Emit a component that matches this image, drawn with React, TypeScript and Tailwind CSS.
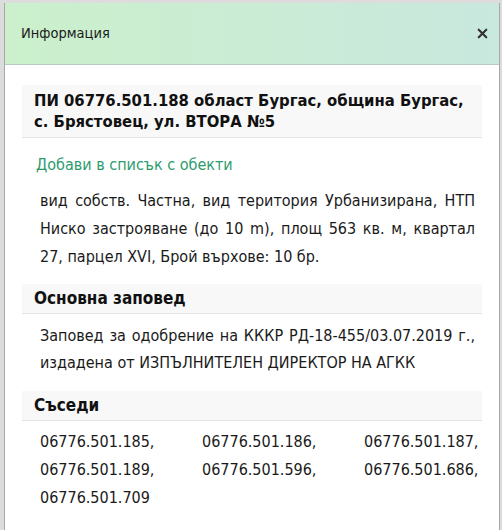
import { X } from 'lucide-react'

const neighbours = [
  '06776.501.185,',
  '06776.501.186,',
  '06776.501.187,',
  '06776.501.189,',
  '06776.501.596,',
  '06776.501.686,',
  '06776.501.709',
]

function SectionTitle({ children }: { children: React.ReactNode }) {
  return (
    <div className="h-[30px] flex items-center bg-[#f8f8f8] border-b border-[#e3e3e3] px-3 text-[17px] font-bold text-[#111]">
      {children}
    </div>
  )
}

export default function App() {
  return (
    <div
      className="w-[502px] h-[530px] overflow-hidden bg-[#dcdcdc] pt-[3px]"
      style={{ fontFamily: '"DejaVu Sans Condensed", "DejaVu Sans", sans-serif' }}
    >
      <div className="ml-[4px] w-[496px] h-[540px] bg-white border-x border-[#a8a8a8]">
        <div className="h-[62px] flex items-center justify-between pl-[16px] pr-[9px] bg-gradient-to-r from-[#cbf0cb] to-[#c9e8de] border-b border-[#b9c9c0]">
          <span className="text-[14.5px] text-[#1a1a1a]">Информация</span>
          <X className="size-[15px] text-[#333]" strokeWidth={3.5} />
        </div>

        <div className="px-[17px] pt-[20px]">
          <div className="h-[53px] flex items-center bg-[#f8f8f8] border-b border-[#e3e3e3] pl-3 pr-1 text-[16.5px] font-bold leading-[21px] text-[#111]">
            ПИ 06776.501.188 област Бургас, община Бургас, с. Брястовец, ул. ВТОРА №5
          </div>

          <div className="mt-[17px] h-[20px] leading-[20px] pl-[14px] text-[16px] text-[#2e9b6e]">Добави в списък с обекти</div>

          <p className="mt-[12px] pl-[18px] pr-[7px] text-[16px] leading-[28px] text-[#1a1a1a] text-justify">
            вид собств. Частна, вид територия Урбанизирана, НТП Ниско застрояване (до 10 m), площ 563 кв. м, квартал 27, парцел XVI, Брой върхове: 10 бр.
          </p>

          <div className="mt-[13px]">
            <SectionTitle>Основна заповед</SectionTitle>
          </div>
          <p className="mt-[8px] pl-[18px] pr-[7px] text-[16px] leading-[27px] text-[#1a1a1a] text-justify">
            Заповед за одобрение на КККР РД-18-455/03.07.2019 г., издадена от ИЗПЪЛНИТЕЛЕН ДИРЕКТОР НА АГКК
          </p>

          <div className="mt-[15px]">
            <SectionTitle>Съседи</SectionTitle>
          </div>
          <div className="mt-[7px] pl-[18px] grid grid-cols-[162px_162px_auto] text-[16px] leading-[28px] text-[#1a1a1a]">
            {neighbours.map((n) => (
              <span key={n}>{n}</span>
            ))}
          </div>
        </div>
      </div>
    </div>
  )
}
